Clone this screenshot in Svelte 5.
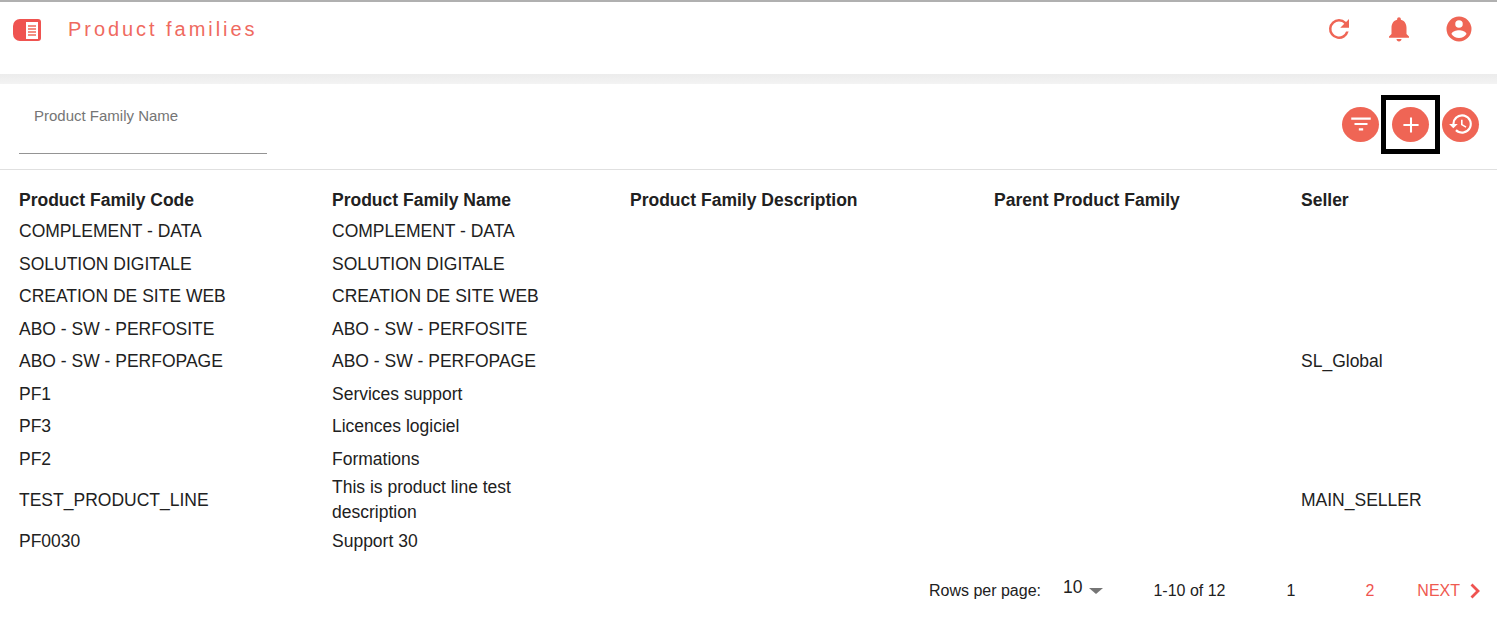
<script>
  const rows = [
    ['COMPLEMENT - DATA', 'COMPLEMENT - DATA', '', '', ''],
    ['SOLUTION DIGITALE', 'SOLUTION DIGITALE', '', '', ''],
    ['CREATION DE SITE WEB', 'CREATION DE SITE WEB', '', '', ''],
    ['ABO - SW - PERFOSITE', 'ABO - SW - PERFOSITE', '', '', ''],
    ['ABO - SW - PERFOPAGE', 'ABO - SW - PERFOPAGE', '', '', 'SL_Global'],
    ['PF1', 'Services support', '', '', ''],
    ['PF3', 'Licences logiciel', '', '', ''],
    ['PF2', 'Formations', '', '', ''],
    ['TEST_PRODUCT_LINE', 'This is product line test description', '', '', 'MAIN_SELLER'],
    ['PF0030', 'Support 30', '', '', '']
  ];
  const columns = ['Product Family Code', 'Product Family Name', 'Product Family Description', 'Parent Product Family', 'Seller'];
</script>

<div class="page">
  <header class="topbar">
    <div class="title-group">
      <svg class="menu-icon" viewBox="0 0 28 22" width="28" height="22">
        <path d="M7 0h18a3 3 0 0 1 3 3v16a3 3 0 0 1-3 3H7a7 7 0 0 1-7-7V7a7 7 0 0 1 7-7z" fill="#ef5350" />
        <rect x="13" y="3" width="12" height="17" fill="#fff" />
        <path d="M15 7h8M15 10h8M15 13h8M15 16h8" stroke="#ef6a5a" stroke-width="1.5" />
      </svg>
      <span class="title">Product families</span>
    </div>
    <div class="top-actions">
      <svg viewBox="0 0 24 24" width="30" height="30"><path fill="#ef6555" d="M17.65 6.35A7.96 7.96 0 0 0 12 4a8 8 0 1 0 7.73 10h-2.08A6 6 0 1 1 12 6c1.66 0 3.14.69 4.22 1.78L13 11h7V4l-2.35 2.35z" /></svg>
      <svg viewBox="0 0 24 24" width="30" height="30"><path fill="#ef6555" d="M12 22c1.1 0 2-.9 2-2h-4c0 1.1.9 2 2 2zm6-6v-5c0-3.07-1.63-5.64-4.5-6.32V4c0-.83-.67-1.5-1.5-1.5s-1.5.67-1.5 1.5v.68C7.64 5.36 6 7.92 6 11v5l-2 2v1h16v-1l-2-2z" /></svg>
      <svg viewBox="0 0 24 24" width="30" height="30"><path fill="#ef6555" d="M12 2a10 10 0 1 0 0 20 10 10 0 0 0 0-20zm0 3a3 3 0 1 1 0 6 3 3 0 0 1 0-6zm0 14.2a7.2 7.2 0 0 1-6-3.22c.03-1.99 4-3.08 6-3.08s5.97 1.09 6 3.08a7.2 7.2 0 0 1-6 3.22z" /></svg>
    </div>
  </header>
  <div class="band"></div>

  <section class="filters">
    <div class="field"><span class="field-label">Product Family Name</span></div>
    <div class="tools">
      <button class="round" aria-label="Filter">
        <svg viewBox="0 0 24 24" width="26" height="26"><path fill="#fff" d="M10 18h4v-2h-4v2zM3 6v2h18V6H3zm3 7h12v-2H6v2z" /></svg>
      </button>
      <div class="highlight">
        <button class="round" aria-label="Add">
          <svg viewBox="0 0 24 24" width="26" height="26"><path fill="none" stroke="#fff" stroke-width="1.9" d="M12 5v14M5 12h14" /></svg>
        </button>
      </div>
      <button class="round" aria-label="History">
        <svg viewBox="0 0 24 24" width="26" height="26"><path fill="#fff" d="M13 3a9 9 0 0 0-9 9H1l3.89 3.89.07.14L9 12H6a7 7 0 1 1 2.05 4.95l-1.42 1.42A9 9 0 1 0 13 3zm-1 5v5l4.28 2.54.72-1.21-3.5-2.08V8H12z" /></svg>
      </button>
    </div>
  </section>

  <table>
    <thead>
      <tr>
        {#each columns as col}<th>{col}</th>{/each}
      </tr>
    </thead>
    <tbody>
      {#each rows as row}
        <tr>
          {#each row as cell}<td>{cell}</td>{/each}
        </tr>
      {/each}
    </tbody>
  </table>

  <footer class="pager">
    <span class="rows-label">Rows per page:</span>
    <span class="rows-select">10<span class="caret"></span></span>
    <span class="range">1-10 of 12</span>
    <span class="pg">1</span>
    <span class="pg link">2</span>
    <span class="next">NEXT
      <svg viewBox="0 0 12 16" width="12" height="16"><path d="M2.5 1.5l6.5 6.5-6.5 6.5" fill="none" stroke="#ef5350" stroke-width="2.8" /></svg>
    </span>
  </footer>
</div>

<style>
  :global(body) {
    margin: 0;
    background: #fff;
  }

  .page {
    width: 1497px;
    height: 620px;
    overflow: hidden;
    font-family: "Liberation Sans", Arial, sans-serif;
    color: #212121;
    border-top: 2px solid #b0b0b0;
    box-sizing: border-box;
  }

  .topbar {
    height: 72px;
    display: flex;
    justify-content: space-between;
    align-items: flex-start;
    padding: 0 23px 0 13px;
  }

  .title-group {
    display: flex;
    align-items: center;
    gap: 27px;
    height: 54px;
  }

  .menu-icon {
    display: block;
    margin-top: 2px;
  }

  .title {
    font-size: 20px;
    letter-spacing: 2.95px;
    color: #ef6a5f;
  }

  .top-actions {
    display: flex;
    gap: 30px;
    align-items: center;
    height: 54px;
  }

  .band {
    height: 10px;
    background: linear-gradient(#ececec, #f3f3f3);
  }

  .filters {
    height: 86px;
    border-bottom: 1px solid #e0e0e0;
    display: flex;
    justify-content: space-between;
    padding: 0 18px 0 19px;
    box-sizing: border-box;
  }

  .field {
    width: 248px;
    height: 70px;
    border-bottom: 1px solid #949494;
    box-sizing: border-box;
    padding: 23px 0 0 15px;
    font-size: 15px;
    color: #757575;
  }

  .tools {
    display: flex;
    align-items: center;
    gap: 2px;
    height: 80px;
  }

  .round {
    width: 37px;
    height: 35px;
    border: 0;
    padding: 0;
    border-radius: 50%;
    background: #ef6555;
    display: flex;
    align-items: center;
    justify-content: center;
  }

  .highlight {
    width: 49px;
    height: 49px;
    border: 5px solid #000;
    box-sizing: content-box;
    display: flex;
    align-items: center;
    justify-content: center;
    margin-top: 1px;
  }

  table {
    border-collapse: collapse;
    table-layout: fixed;
    width: 1497px;
    font-size: 17.5px;
  }

  th, td {
    padding: 0 0 0 19px;
    text-align: left;
    line-height: 25px;
    box-sizing: border-box;
  }

  th {
    font-weight: 700;
    height: 45.25px;
    padding-top: 15px;
    color: #212121;
  }

  td {
    height: 32.5px;
  }

  th:nth-child(1) { width: 313px; }
  th:nth-child(2) { width: 298px; }
  th:nth-child(3) { width: 364px; }
  th:nth-child(4) { width: 307px; }
  td:nth-child(2) { padding-right: 40px; }

  .pager {
    display: flex;
    justify-content: flex-end;
    align-items: center;
    margin-top: 18px;
    height: 30px;
    padding-right: 16px;
    font-size: 16px;
    color: #212121;
  }

  .rows-label { margin-right: 22px; }

  .rows-select {
    display: flex;
    align-items: center;
    font-size: 17.5px;
    margin-top: -7px;
    margin-right: 50px;
  }

  .caret {
    border-left: 7px solid transparent;
    border-right: 7px solid transparent;
    border-top: 6px solid #757575;
    margin: 7px 0 0 7px;
  }

  .range { margin-right: 61px; }
  .pg { margin-right: 70px; }
  .pg.link { margin-right: 43px; color: #ef5350; }

  .next {
    color: #ef5a50;
    display: flex;
    align-items: center;
    gap: 9px;
  }
</style>
